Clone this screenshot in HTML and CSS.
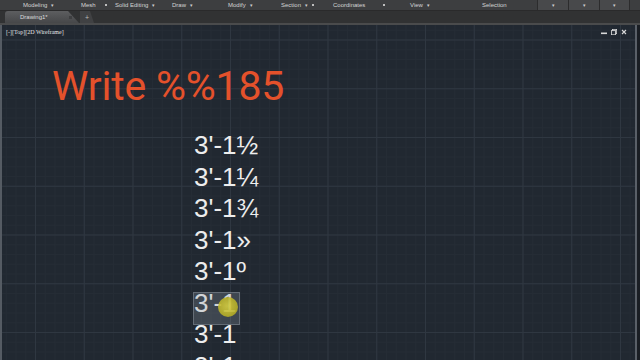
FILE: index.html
```html
<!DOCTYPE html>
<html lang="en">
<head>
  <meta charset="UTF-8" />
  <title>Drawing1*</title>
  <link rel="stylesheet" href="styles.css">
</head>
<body>

<div class="ribbon">
  <div class="rp rp-modeling"><span>Modeling</span><i class="arr">▾</i></div>
  <div class="rp rp-mesh"><span>Mesh</span><i class="launch"></i></div>
  <div class="rp rp-solid"><span>Solid Editing</span><i class="arr">▾</i></div>
  <div class="rp rp-draw"><span>Draw</span><i class="arr">▾</i></div>
  <div class="rp rp-modify"><span>Modify</span><i class="arr">▾</i></div>
  <div class="rp rp-section"><span>Section</span><i class="arr">▾</i><i class="launch"></i></div>
  <div class="rp rp-coords"><span>Coordinates</span><i class="launch wide"></i></div>
  <div class="rp rp-view"><span>View</span><i class="arr">▾</i></div>
  <div class="rp rp-select"><span>Selection</span></div>
  <div class="seg"><i class="arr">▾</i></div>
  <div class="seg"><i class="arr">▾</i></div>
  <div class="seg"><i class="arr">▾</i></div>
</div>

<div class="tabs">
  <div class="tab active">Drawing1*<i class="tab-x"></i></div>
  <div class="tab plus">+</div>
</div>

<div class="viewport">
  <div class="vp-head">
    <span class="vp-label">[-][Top][2D Wireframe]</span>
    <div class="vp-ctrl">
      <svg width="6" height="6" viewBox="0 0 6 6"><rect x="0" y="3.5" width="6" height="1.6" fill="#d8d8d8"/></svg>
      <svg width="6" height="6" viewBox="0 0 6 6"><rect x="1.5" y="0.3" width="4.2" height="4.2" fill="none" stroke="#d8d8d8" stroke-width="0.9"/><rect x="0.4" y="1.6" width="4.2" height="4.2" fill="#2a313a" stroke="#d8d8d8" stroke-width="0.9"/></svg>
      <svg width="6" height="6" viewBox="0 0 6 6"><path d="M1 1 L5 5 M5 1 L1 5" stroke="#d8d8d8" stroke-width="1.1"/></svg>
    </div>
  </div>

  <div class="drawing">
    <div class="title">Write %%185</div>
    <div class="dims">
      <div>3'-1½</div>
      <div>3'-1¼</div>
      <div>3'-1¾</div>
      <div>3'-1»</div>
      <div>3'-1º</div>
      <div><span class="picked">3'-1<i class="cursor"></i></span></div>
      <div>3'-1</div>
      <div>3'-1</div>
    </div>
  </div>
</div>

</body>
</html>
```

FILE: styles.css
```css
body {
  margin: 0;
  width: 640px;
  height: 360px;
  overflow: hidden;
  background: #212831;
  font-family: "Liberation Sans", Arial, sans-serif;
  color: #fff;
}
.ribbon {
  display: flex;
  height: 10px;
  background: #3d3e40;
  color: #d4d4d4;
  font-size: 6px;
  border-bottom: 1px solid #2a2a2b;
}
.rp {
  box-sizing: border-box;
  display: flex;
  align-items: center;
  gap: 4px;
  white-space: nowrap;
}
.rp-modeling { width: 81px; padding-left: 23px; }
.rp-mesh { width: 34px; gap: 9px; }
.rp-solid { width: 57px; }
.rp-draw { width: 56px; }
.rp-modify { width: 53px; }
.rp-section { width: 52px; }
.rp-coords { width: 77px; gap: 18px; }
.rp-view { width: 72px; }
.rp-select { width: 55px; }
.arr {
  font-style: normal;
  font-size: 5px;
  color: #cfcfcf;
}
.launch {
  width: 2px;
  height: 2px;
  background: #bdbdbd;
}
.seg {
  box-sizing: border-box;
  width: 31px;
  display: flex;
  justify-content: center;
  align-items: center;
  background: #48494b;
  border-left: 1px solid #2c2c2d;
}
.seg:last-child {
  border-right: 1px solid #2c2c2d;
}
.tabs {
  display: flex;
  align-items: flex-end;
  height: 12px;
  padding-left: 5px;
  background: #313233;
  border-bottom: 2px solid #4a4b4c;
}
.tab {
  height: 12px;
  display: flex;
  align-items: center;
  font-size: 6px;
  color: #dcdcdc;
}
.tab.active {
  width: 74px;
  padding-left: 15px;
  box-sizing: border-box;
  background: linear-gradient(#5d5e60, #464749);
  border-top-left-radius: 3px;
  clip-path: polygon(0 0, 63px 0, 74px 100%, 0 100%);
}
.tab-x {
  width: 3px;
  height: 3px;
  margin-left: 21px;
  background: #3e3f41;
}
.tab.plus {
  width: 14px;
  margin-left: 1px;
  justify-content: center;
  background: #404143;
  clip-path: polygon(0 0, 10px 0, 14px 100%, 0 100%);
  font-size: 7px;
  color: #bcbcbc;
}
.viewport {
  height: 335px;
  background-color: #212831;
  background-image:
    linear-gradient(to right, #2f3741 1px, transparent 1px),
    linear-gradient(to bottom, #2f3741 1px, transparent 1px),
    linear-gradient(to right, #252c35 1px, transparent 1px),
    linear-gradient(to bottom, #252c35 1px, transparent 1px);
  background-size: 48.75px 48.75px, 48.75px 48.75px, 9.75px 9.75px, 9.75px 9.75px;
  background-position: 33px 14.5px, 33px 14.5px, 3.75px 4.75px, 3.75px 4.75px;
  border-left: 2px solid #555b63;
  border-right: 3px solid #1a1e24;
  box-shadow: inset -2px 0 0 #5a6068;
  box-sizing: border-box;
}
.vp-head {
  display: flex;
  justify-content: space-between;
  align-items: center;
  height: 14px;
  padding: 0 10px 0 4px;
}
.vp-label {
  font-family: "Liberation Serif", serif;
  font-size: 6px;
  color: #e6e6e6;
}
.vp-ctrl {
  display: flex;
  gap: 4px;
}
.drawing {
  padding-top: 26px;
}
.title {
  margin-left: 50px;
  font-family: Roboto, "Liberation Sans", sans-serif;
  font-size: 41px;
  line-height: 42px;
  letter-spacing: -0.2px;
  color: #e4512b;
}
.dims {
  margin: 23.2px 0 0 192px;
  font-size: 26px;
  line-height: 31.5px;
  color: #ededed;
}
.picked {
  position: relative;
}
.picked::before {
  content: "";
  position: absolute;
  left: -1px;
  right: -3px;
  top: 4px;
  bottom: -7px;
  background: rgba(140, 150, 162, 0.28);
  border: 1px solid rgba(160, 168, 178, 0.4);
}
.cursor {
  position: absolute;
  left: 24px;
  top: 9px;
  width: 20px;
  height: 20px;
  border-radius: 50%;
  background: radial-gradient(circle at 45% 45%, #d8d040, #b3ab22 75%, #8c861c);
  opacity: 0.88;
}
```
